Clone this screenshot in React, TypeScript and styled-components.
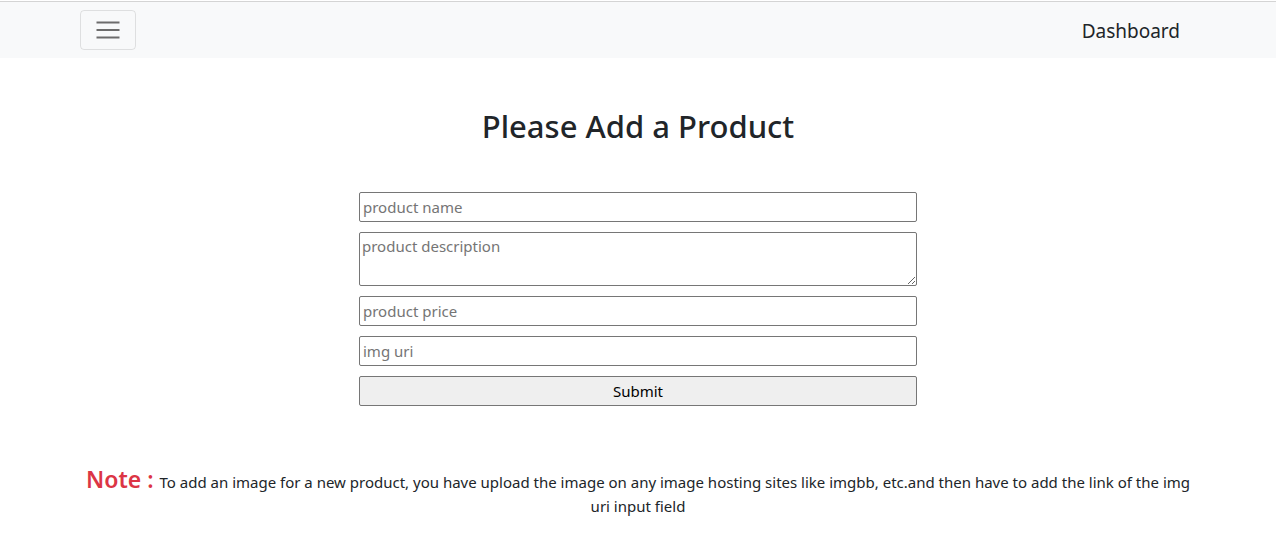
import React from "react";
import styled, { createGlobalStyle } from "styled-components";

const Global = createGlobalStyle`
  html, body { margin: 0; padding: 0; background: #fff; }
  body {
    font-family: "Noto Sans", "Open Sans", sans-serif;
    color: #212529;
    padding-top: 1px;
  }
  * { box-sizing: border-box; }
`;

const NavBar = styled.nav`
  background: #f8f9fa;
  border-top: 1px solid #d4d4d4;
  height: 57px;
  display: flex;
  align-items: center;
`;

const NavInner = styled.div`
  width: 1140px;
  margin: 0 auto;
  padding: 0 12px;
  display: flex;
  align-items: center;
  justify-content: space-between;
`;

const Toggler = styled.button`
  width: 56px;
  height: 40px;
  background: transparent;
  border: 1px solid rgba(0, 0, 0, 0.1);
  border-radius: 4px;
  display: flex;
  align-items: center;
  justify-content: center;
  padding: 0;
  cursor: pointer;
`;

const NavLink = styled.a`
  font-size: 19px;
  color: #212529;
  text-decoration: none;
  margin-right: 16px;
  padding-top: 2px;
`;

const Main = styled.main`
  display: flex;
  flex-direction: column;
  align-items: center;
`;

const Title = styled.h2`
  margin: 50px 0 0;
  font-size: 31px;
  font-weight: 500;
  line-height: 1.2;
`;

const Form = styled.form`
  width: 558px;
  margin-top: 47px;
  display: flex;
  flex-direction: column;
  gap: 10px;
`;

const Field = styled.input`
  height: 30px;
  border: 1px solid #767676;
  border-radius: 2px;
  padding: 0 3px;
  font-family: inherit;
  font-size: 15px;
  color: #212529;
  &::placeholder { color: #757575; }
`;

const Area = styled.textarea`
  height: 54px;
  border: 1px solid #767676;
  border-radius: 2px;
  padding: 4px 2px 2px;
  font-family: inherit;
  font-size: 15px;
  line-height: 1.3;
  resize: vertical;
  &::placeholder { color: #757575; }
`;

const Submit = styled.button`
  height: 30px;
  background: #efefef;
  border: 1px solid #767676;
  border-radius: 2px;
  font-family: inherit;
  font-size: 15px;
  color: #000;
`;

const Note = styled.p`
  width: 1140px;
  margin: 61px auto 0;
  padding: 0 12px;
  text-align: center;
  font-size: 15px;
  line-height: 24px;
`;

const NoteLabel = styled.span`
  color: #dc3545;
  font-size: 23px;
  font-weight: 600;
`;

export default function App() {
  return (
    <>
      <Global />
      <NavBar>
        <NavInner>
          <Toggler aria-label="menu">
            <svg width="26" height="22" viewBox="0 0 26 22">
              <path d="M1.5 3.5h23M1.5 11h23M1.5 18.5h23" stroke="#6c6c6c" strokeWidth="2" />
            </svg>
          </Toggler>
          <NavLink href="#">Dashboard</NavLink>
        </NavInner>
      </NavBar>
      <Main>
        <Title>Please Add a Product</Title>
        <Form onSubmit={(e) => e.preventDefault()}>
          <Field placeholder="product name" />
          <Area placeholder="product description" />
          <Field placeholder="product price" />
          <Field placeholder="img uri" />
          <Submit type="submit">Submit</Submit>
        </Form>
      </Main>
      <Note>
        <NoteLabel>Note : </NoteLabel>
        To add an image for a new product, you have upload the image on any image hosting sites like imgbb, etc.and then have to add the link of the img uri input field
      </Note>
    </>
  );
}
